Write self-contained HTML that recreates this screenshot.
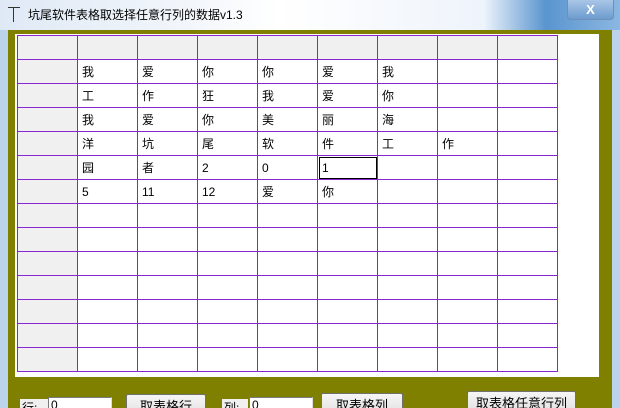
<!DOCTYPE html>
<html><head><meta charset="utf-8"><style>
html,body{margin:0;width:620px;height:408px;overflow:hidden}
body{background:#bcd3ec;font-family:"Liberation Sans","Noto Sans CJK SC",sans-serif;font-size:12px;position:relative}
.tb{position:absolute;left:0;top:0;width:620px;height:30px;background:linear-gradient(90deg,#dfe9f5 0,#f2f6fb 30%,#ffffff 45%,#eef4fb 78%,#5a95cf 88%,#8bb7e2 100%)}
.title{position:absolute;left:28px;top:6px;font-size:12px;color:#000}
.ic{position:absolute;left:8px;top:7px;width:12px;height:14px;border-top:1px solid #333}
.ic:after{content:"";position:absolute;left:5px;top:0;height:14px;border-left:1px solid #333}
.cls{position:absolute;left:567px;top:0;width:45px;height:19px;border:1px solid #6f8fb5;border-top:none;border-radius:0 0 4px 4px;background:linear-gradient(#a9c6e6,#6d9ccf);color:#fff;font-weight:bold;text-align:center;line-height:19px;font-size:13px}
.client{position:absolute;left:8px;top:30px;width:604px;height:378px;background:#808000}
.grid{position:absolute;left:15px;top:34px;width:584px;height:343px;background:#fff}
table{position:absolute;left:17px;top:35px;border-collapse:collapse;table-layout:fixed}
td{width:60px;height:24px;border:1px solid #8a24cc;padding:0 0 0 4px;box-sizing:border-box;font-size:12px;vertical-align:middle;overflow:hidden}
td.h{background:#f0f0f0}
tr.hd td{background:#f0f0f0}
.sel{outline:1px solid #000;outline-offset:-2px}
.lbl{position:absolute;background:#f0f0f0;height:16px;font-size:12px;padding-left:2px}
.inp{position:absolute;background:#fff;border:1px solid #7a7a7a;border-right-color:#ddd;height:16px;font-size:12px;padding-left:2px}
.btn{position:absolute;background:linear-gradient(#f6f6f6,#dedede);border:1px solid #707070;border-radius:2px;text-align:center;font-size:13px;line-height:24px;height:24px}
</style></head><body>
<div class="tb"><div class="ic"></div><div class="title">坑尾软件表格取选择任意行列的数据v1.3</div><div class="cls">X</div></div>
<div class="client"></div>
<div class="grid"></div>
<table>
<tr class="hd"><td></td><td></td><td></td><td></td><td></td><td></td><td></td><td></td><td></td></tr>
<tr><td class="h"></td><td>我</td><td>爱</td><td>你</td><td>你</td><td>爱</td><td>我</td><td></td><td></td></tr>
<tr><td class="h"></td><td>工</td><td>作</td><td>狂</td><td>我</td><td>爱</td><td>你</td><td></td><td></td></tr>
<tr><td class="h"></td><td>我</td><td>爱</td><td>你</td><td>美</td><td>丽</td><td>海</td><td></td><td></td></tr>
<tr><td class="h"></td><td>洋</td><td>坑</td><td>尾</td><td>软</td><td>件</td><td>工</td><td>作</td><td></td></tr>
<tr><td class="h"></td><td>园</td><td>者</td><td>2</td><td>0</td><td class="sel">1</td><td></td><td></td><td></td></tr>
<tr><td class="h"></td><td>5</td><td>11</td><td>12</td><td>爱</td><td>你</td><td></td><td></td><td></td></tr>
<tr><td class="h"></td><td></td><td></td><td></td><td></td><td></td><td></td><td></td><td></td></tr>
<tr><td class="h"></td><td></td><td></td><td></td><td></td><td></td><td></td><td></td><td></td></tr>
<tr><td class="h"></td><td></td><td></td><td></td><td></td><td></td><td></td><td></td><td></td></tr>
<tr><td class="h"></td><td></td><td></td><td></td><td></td><td></td><td></td><td></td><td></td></tr>
<tr><td class="h"></td><td></td><td></td><td></td><td></td><td></td><td></td><td></td><td></td></tr>
<tr><td class="h"></td><td></td><td></td><td></td><td></td><td></td><td></td><td></td><td></td></tr>
<tr><td class="h"></td><td></td><td></td><td></td><td></td><td></td><td></td><td></td><td></td></tr>
</table>
<div class="lbl" style="left:20px;top:399px;width:26px">行:</div>
<div class="inp" style="left:48px;top:397px;width:60px">0</div>
<div class="btn" style="left:126px;top:394px;width:78px">取表格行</div>
<div class="lbl" style="left:222px;top:399px;width:24px">列:</div>
<div class="inp" style="left:249px;top:397px;width:60px">0</div>
<div class="btn" style="left:321px;top:393px;width:80px">取表格列</div>
<div class="btn" style="left:467px;top:391px;width:107px">取表格任意行列</div>
</body></html>
